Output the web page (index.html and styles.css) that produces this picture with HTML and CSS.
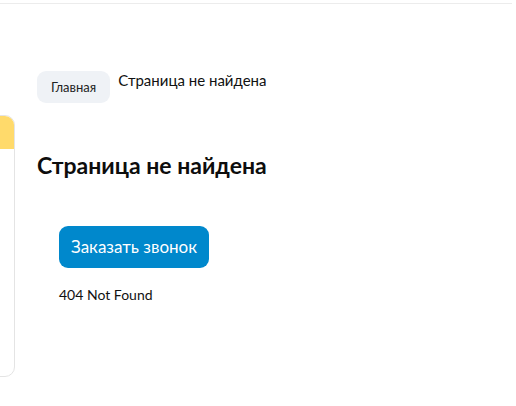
FILE: index.html
```html
<!DOCTYPE html>
<html lang="ru">
<head>
<meta charset="utf-8">
<link rel="stylesheet" href="styles.css">
</head>
<body>
<div class="topbar"></div>
<div class="page">
  <nav class="crumbs">
    <a class="crumb-home" href="#">Главная</a>
    <span class="crumb-current">Страница не найдена</span>
  </nav>
  <div class="layout">
    <aside class="sidebar">
      <div class="sidebar-head"></div>
    </aside>
    <main class="content">
      <h1 class="title">Страница не найдена</h1>
      <div class="body">
        <button class="callback">Заказать звонок</button>
        <p class="msg">404 Not Found</p>
      </div>
    </main>
  </div>
</div>
</body>
</html>
```
FILE: styles.css
```css
html, body {
  margin: 0;
  padding: 0;
  background: #fff;
  overflow: hidden;
}
*, *::before, *::after {
  box-sizing: border-box;
}
body {
  font-family: Lato, "Liberation Sans", sans-serif;
  color: #1a1a1a;
}
.topbar {
  width: 512px;
  height: 4px;
  border-bottom: 1px solid #ececec;
}
.page {
  padding-left: 37px;
}
.crumbs {
  display: flex;
  align-items: flex-start;
  gap: 8px;
  margin-top: 67px;
}
.crumb-home {
  display: block;
  height: 32px;
  line-height: 32px;
  padding: 0 14px;
  border-radius: 9px;
  background: #eff2f6;
  color: #222;
  font-size: 13px;
  text-decoration: none;
}
.crumb-current {
  font-size: 15px;
  line-height: 18px;
  color: #111;
}
.layout {
  display: flex;
  gap: 22px;
  margin-top: 12px;
  margin-left: -222px;
}
.sidebar {
  flex: 0 0 200px;
  height: 262px;
  border: 1px solid #e4e4e4;
  border-radius: 10px;
  overflow: hidden;
}
.sidebar-head {
  height: 33px;
  background: #ffda6b;
}
.content {
  flex: 1;
}
.title {
  margin: 36px 0 0;
  font-size: 23px;
  line-height: 28px;
  font-weight: 700;
  color: #0d0d0d;
}
.body {
  padding-left: 22px;
}
.callback {
  display: block;
  margin-top: 47px;
  height: 42px;
  padding: 0 12px;
  border: 0;
  border-radius: 9px;
  background: #0088cc;
  color: #fff;
  font-family: inherit;
  font-size: 17px;
  line-height: 42px;
  cursor: pointer;
}
.msg {
  margin: 17px 0 0;
  font-size: 14px;
  line-height: 20px;
  color: #111;
}
```
